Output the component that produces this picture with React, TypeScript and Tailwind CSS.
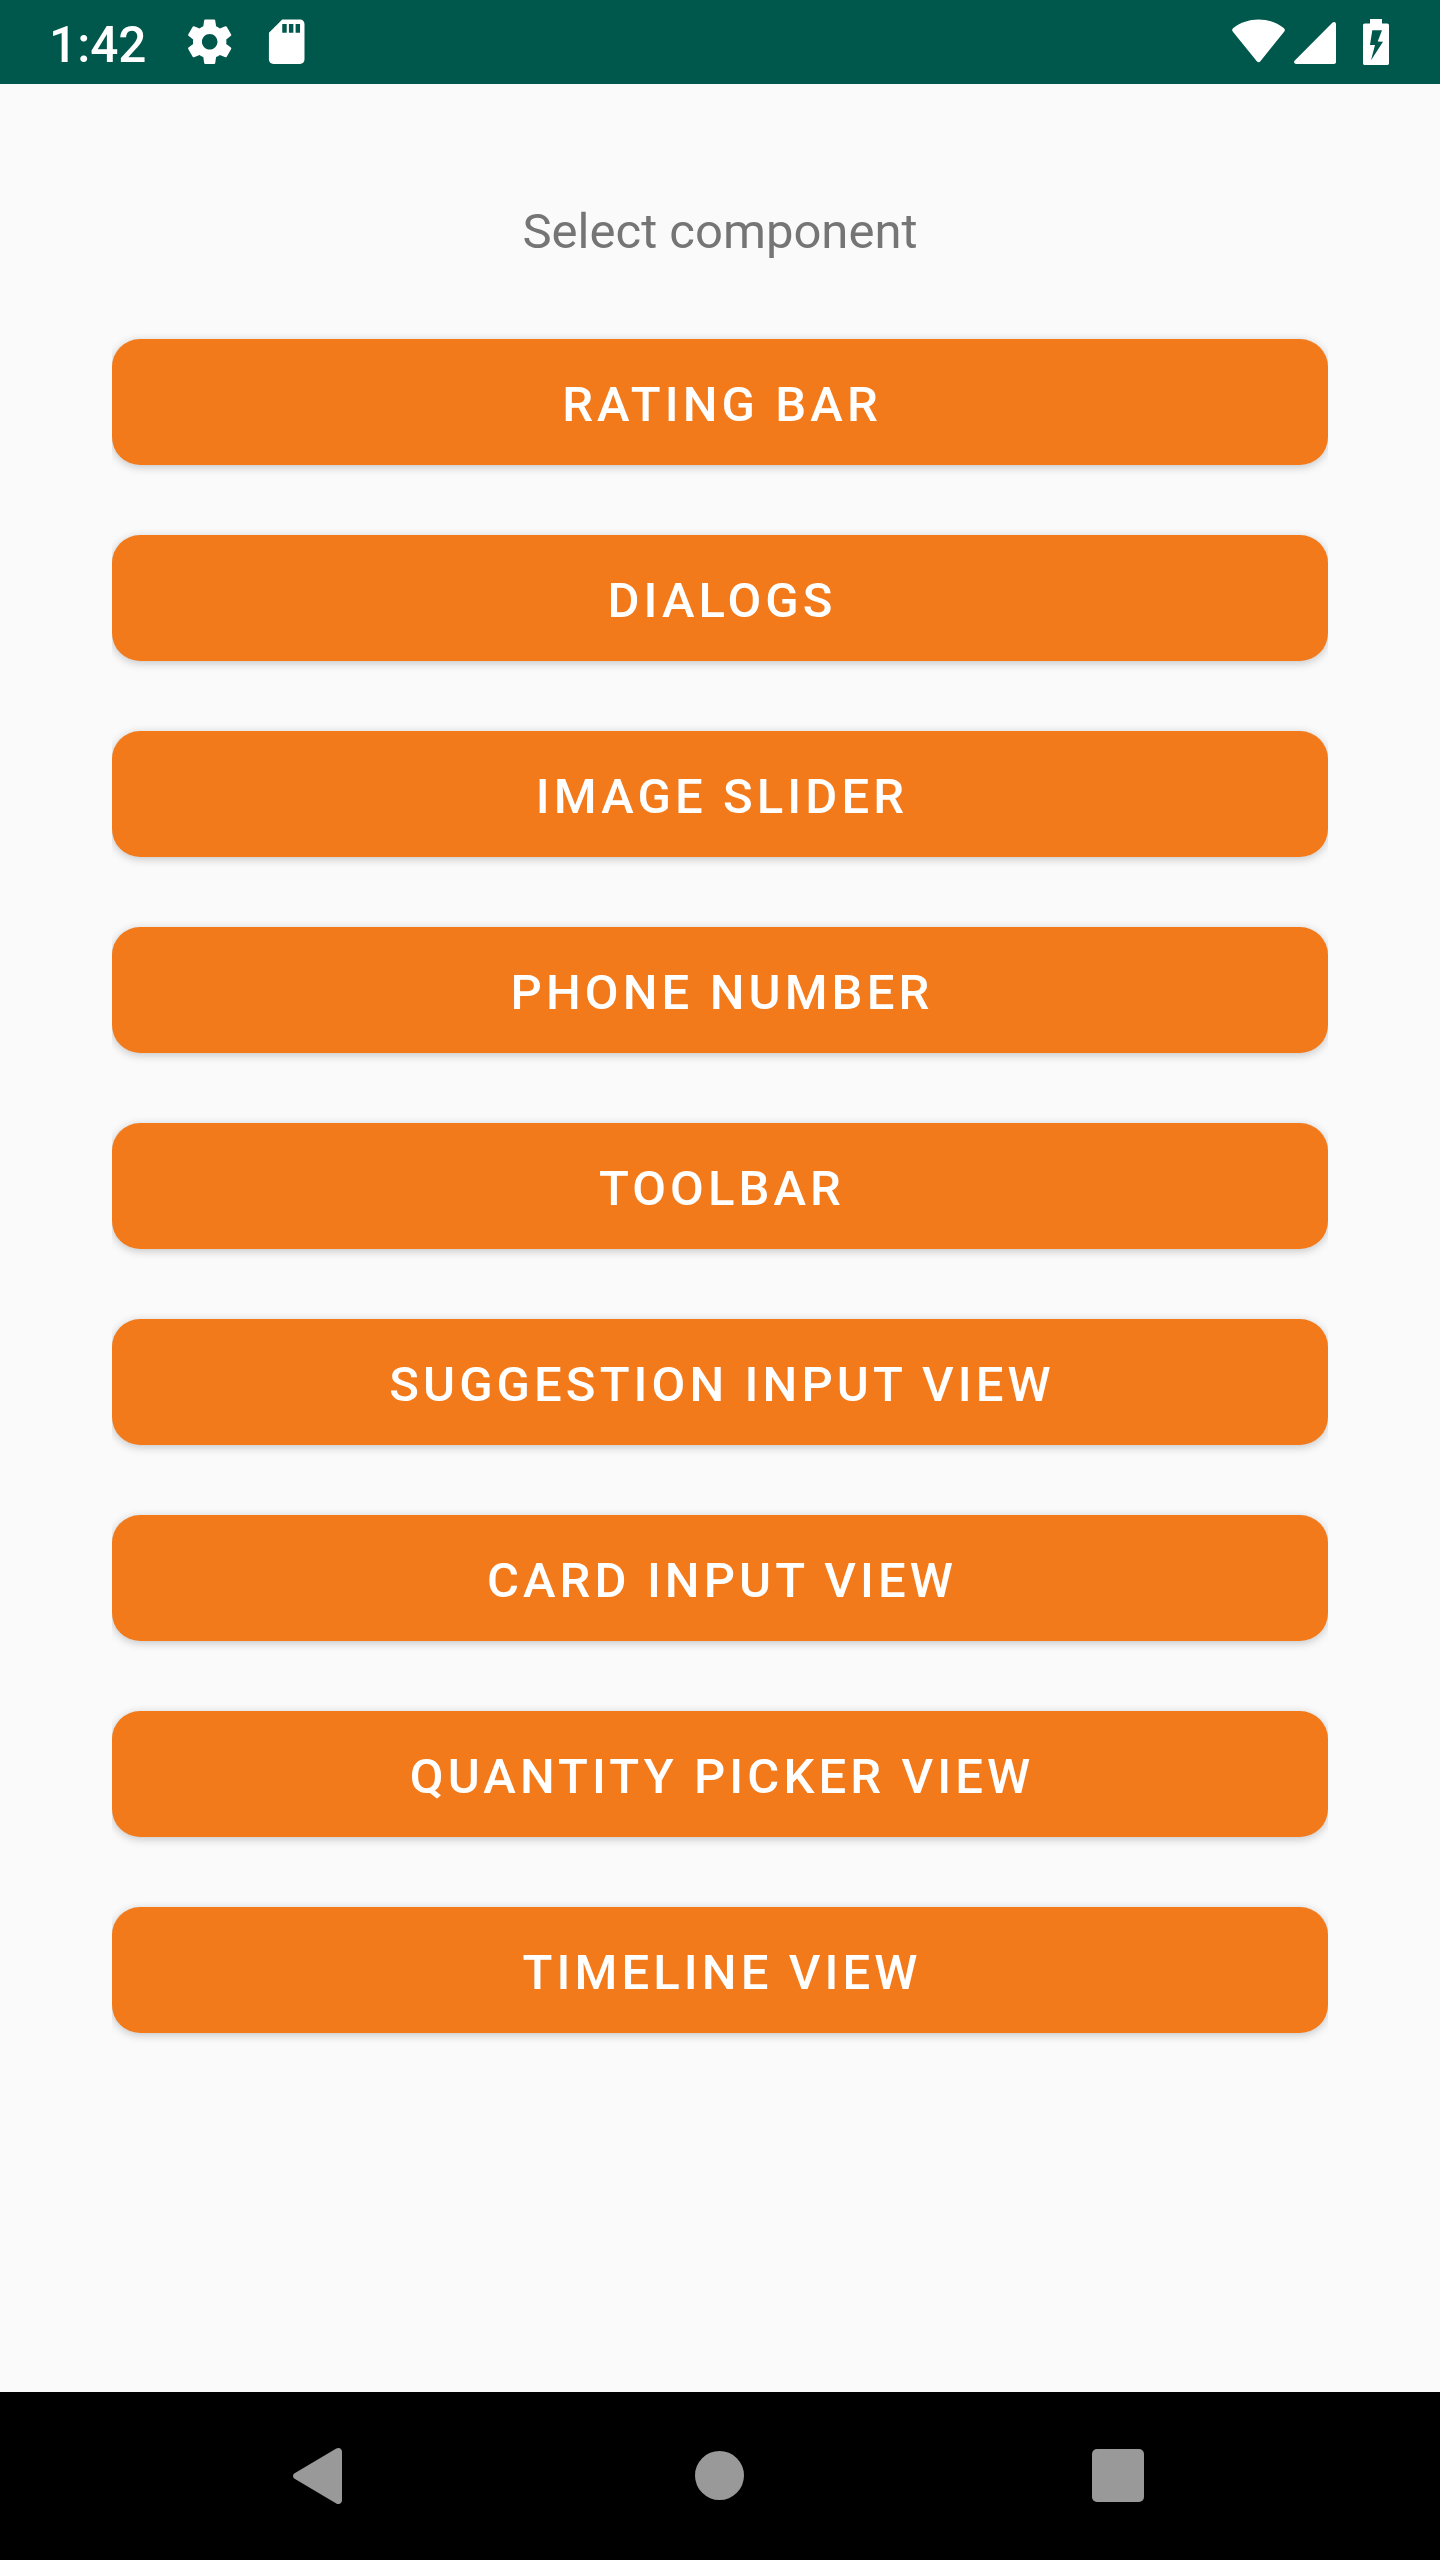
const items = [
  'RATING BAR',
  'DIALOGS',
  'IMAGE SLIDER',
  'PHONE NUMBER',
  'TOOLBAR',
  'SUGGESTION INPUT VIEW',
  'CARD INPUT VIEW',
  'QUANTITY PICKER VIEW',
  'TIMELINE VIEW',
];

function StatusBar() {
  return (
    <header className="flex h-[84px] items-center justify-between bg-[#00574b] pr-[51px] pl-[49px] text-white">
      <div className="flex items-center">
        <span className="mt-[5px] w-[133.6px] text-[49.5px] leading-[56px] font-medium whitespace-nowrap">1:42</span>
        <svg className="size-[53.4px]" viewBox="0 0 24 24" fill="currentColor">
          <path d="M19.43 12.98c.04-.32.07-.64.07-.98s-.03-.66-.07-.98l2.11-1.65c.19-.15.24-.42.12-.64l-2-3.46c-.12-.22-.39-.3-.61-.22l-2.49 1c-.52-.4-1.08-.73-1.69-.98l-.38-2.65C14.46 2.18 14.25 2 14 2h-4c-.25 0-.46.18-.49.42l-.38 2.65c-.61.25-1.17.59-1.69.98l-2.49-1c-.23-.09-.49 0-.61.22l-2 3.46c-.13.22-.07.49.12.64l2.11 1.65c-.04.32-.07.65-.07.98s.03.66.07.98l-2.11 1.65c-.19.15-.24.42-.12.64l2 3.46c.12.22.39.3.61.22l2.49-1c.52.4 1.08.73 1.69.98l.38 2.65c.03.24.24.42.49.42h4c.25 0 .46-.18.49-.42l.38-2.65c.61-.25 1.17-.59 1.69-.98l2.49 1c.23.09.49 0 .61-.22l2-3.46c.12-.22.07-.49-.12-.64l-2.11-1.65zM12 15.5c-1.93 0-3.5-1.57-3.5-3.5s1.57-3.5 3.5-3.5 3.5 1.57 3.5 3.5-1.57 3.5-3.5 3.5z" />
        </svg>
        <svg className="ml-6 size-[53.4px]" viewBox="0 0 24 24" fill="currentColor">
          <path d="M18 2h-8L4.02 8 4 20c0 1.1.9 2 2 2h12c1.1 0 2-.9 2-2V4c0-1.1-.9-2-2-2zm-6 6h-2V4h2v4zm3 0h-2V4h2v4zm3 0h-2V4h2v4z" />
        </svg>
      </div>
      <div className="flex items-center">
        <svg className="h-[46px] w-[53px]" viewBox="0 0 53 46" fill="currentColor">
          <path d="M1.3 8.9C8.5 3.3 17.3.4 26.5.4s18 2.9 25.2 8.5c1.3 1 1.5 2.5.6 3.6L28.4 42.3c-1 1.3-2.6 1.3-3.6 0L.7 12.5c-.9-1.1-.7-2.6.6-3.6z" />
        </svg>
        <svg className="ml-[9px] h-[46px] w-[42px]" viewBox="0 0 42 46" fill="currentColor">
          <path d="M42 5.2V43c0 1.2-.8 2-2 2H2.3C.1 45-.7 42.9.8 41.4L38.6 3.6C40 2.2 42 3 42 5.2z" />
        </svg>
        <svg className="ml-[27px] h-[46px] w-[26px]" viewBox="0 0 26 46" fill="currentColor">
          <path
            fillRule="evenodd"
            d="M7 0h12v4.4h5.2c1 0 1.8.8 1.8 1.8v38c0 1-.8 1.8-1.8 1.8H1.8C.8 46 0 45.2 0 44.2v-38c0-1 .8-1.8 1.8-1.8H7zM9.3 11.3L7 26h5L8 41.3l12-18.6-5.3-.3L19 11.3z"
          />
        </svg>
      </div>
    </header>
  );
}

function NavigationBar() {
  return (
    <nav className="flex h-[168px] items-center bg-black pb-px pl-[293px] text-[#999]">
      <button aria-label="Back">
        <svg className="h-14 w-[49px]" viewBox="0 0 49 56" fill="currentColor">
          <path d="M1.6 25.3L43.3.6C46-.9 49 .6 49 3.7v48.6c0 3.1-3 4.6-5.7 3.1L1.6 30.7c-2.1-1.3-2.1-4.1 0-5.4z" />
        </svg>
      </button>
      <button aria-label="Home" className="ml-[353px] size-[49px] rounded-full bg-[#999]" />
      <button aria-label="Recent apps" className="ml-[347.5px] size-[52.5px] rounded-[5px] bg-[#999]" />
    </nav>
  );
}

export default function App() {
  return (
    <div className="flex h-[2560px] w-[1440px] flex-col bg-[#fafafa] font-[Roboto,sans-serif]">
      <StatusBar />
      <main className="flex flex-1 flex-col items-center px-28">
        <p className="mt-[113px] text-[49px] leading-[70px] text-[#757575]">Select component</p>
        <div className="mt-[72px] flex w-full flex-col gap-[70px] overflow-x-clip">
          {items.map((label) => (
            <button
              key={label}
              className="h-[126px] rounded-[28px] bg-[#f37a1b] pt-[5px] pl-[4px] text-[49px] font-medium tracking-[4.1px] text-white shadow-[0_2px_10px_rgba(0,0,0,0.22)]"
            >
              {label}
            </button>
          ))}
        </div>
      </main>
      <NavigationBar />
    </div>
  );
}
